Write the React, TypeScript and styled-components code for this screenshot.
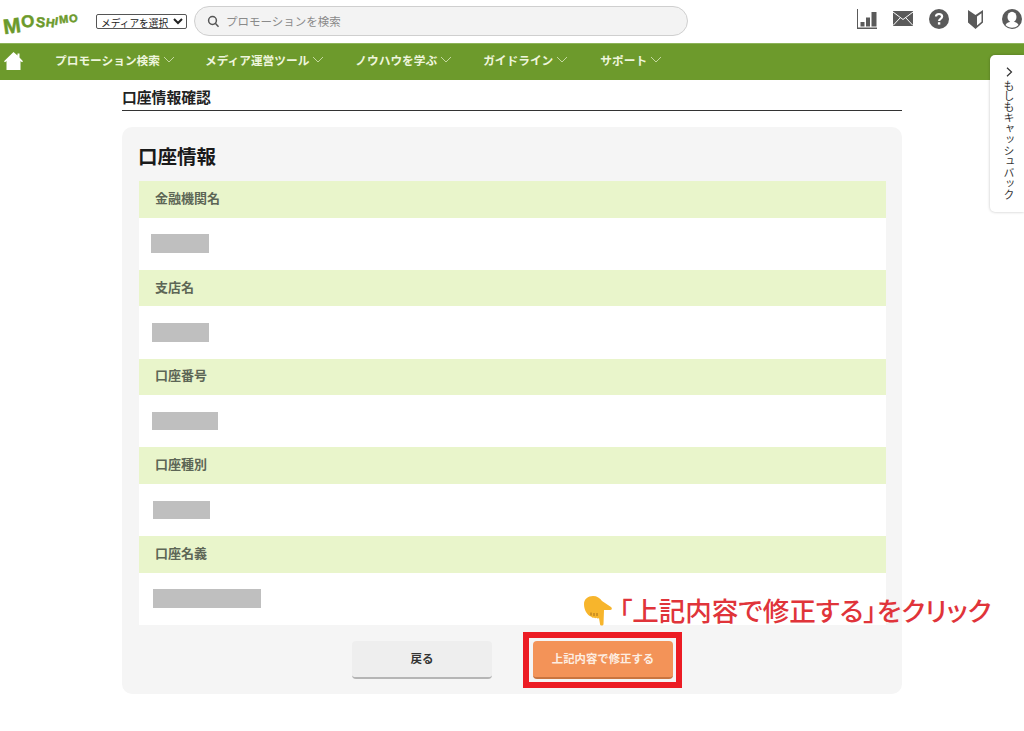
import React from "react";
import styled, { createGlobalStyle } from "styled-components";

const Global = createGlobalStyle`
  html, body { margin: 0; padding: 0; background: #fff; }
  body { font-family: "Noto Sans CJK JP", "Liberation Sans", sans-serif; color: #222; }
`;
const Page = styled.div`
  position: relative;
  width: 1024px;
  height: 731px;
  overflow: hidden;
`;
const Header = styled.header`
  display: flex;
  align-items: center;
  height: 43px;
  padding: 0 2px 0 3px;
  box-sizing: border-box;
`;
const Logo = styled.div`
  display: flex;
  align-items: center;
  width: 93px;
  height: 30px;
  font-family: "Liberation Sans", sans-serif;
  font-weight: 700;
  color: #6c9a2b;
  line-height: 1;
`;
const LogoLetter = styled.span<{ $size: number; $y: number; $r: number }>`
  font-size: ${(p) => p.$size}px;
  -webkit-text-stroke: 0.5px #6c9a2b;
  margin-right: 0.9px;
  transform: translateY(${(p) => p.$y}px) rotate(${(p) => p.$r}deg);
`;
const MediaSelect = styled.select`
  width: 91px;
  height: 15px;
  padding: 0;
  font: 9.7px "Noto Sans CJK JP", sans-serif;
  color: #222;
  background: #fff;
  border: 1px solid #555;
  border-radius: 2px;
  box-sizing: border-box;
`;
const Search = styled.div`
  display: flex;
  align-items: center;
  gap: 6px;
  width: 494px;
  height: 30px;
  margin-left: 7px;
  padding-left: 12px;
  box-sizing: border-box;
  background: #f3f3f3;
  border: 1.5px solid #cfcfcf;
  border-radius: 15px;
  margin-top: -1px;
  font-size: 11.5px;
  color: #8a8a8a;
`;
const HeaderIcons = styled.div`
  display: flex;
  align-items: center;
  margin-left: auto;
  gap: 16px;
  margin-top: -6px;
`;
const Nav = styled.nav`
  display: flex;
  align-items: center;
  height: 37px;
  background: #6d9a2c;
  border-top: 1px solid #8db35a;
  box-sizing: border-box;
  padding: 0 0 5px 4px;
`;
const HomeLink = styled.div`
  display: flex;
  width: 51px;
  margin-top: 3px;
`;
const NavItem = styled.div<{ $gap: number }>`
  display: flex;
  align-items: center;
  gap: 3px;
  margin-right: ${(p) => p.$gap}px;
  font-size: 11.7px;
  font-weight: 700;
  color: #eef5dc;
`;
const Main = styled.main`
  width: 780px;
  margin: 0 0 0 122px;
`;
const PageTitle = styled.h1`
  height: 31px;
  margin: 0;
  padding-top: 7px;
  box-sizing: border-box;
  border-bottom: 1px solid #333;
  font-size: 14.8px;
  line-height: 19px;
  font-weight: 700;
  color: #222;
`;
const Card = styled.section`
  height: 567px;
  margin-top: 16px;
  padding: 16px 16px 0 17px;
  box-sizing: border-box;
  background: #f5f5f5;
  border-radius: 10px;
`;
const CardTitle = styled.h2`
  height: 38px;
  margin: 0 0 0 -1px;
  font-size: 19.5px;
  line-height: 26px;
  font-weight: 700;
  color: #1a1a1a;
`;
const Field = styled.div`
  height: 88.75px;
`;
const FieldLabel = styled.div`
  display: flex;
  align-items: center;
  height: 36.5px;
  padding: 0 0 4px 16px;
  box-sizing: border-box;
  background: #e9f5cb;
  font-size: 13px;
  font-weight: 700;
  color: #5d6656;
`;
const FieldValue = styled.div`
  display: flex;
  align-items: center;
  height: 52.25px;
  background: #fff;
`;
const Redacted = styled.div<{ $w: number; $x: number }>`
  width: ${(p) => p.$w}px;
  height: 18.5px;
  margin-left: ${(p) => p.$x}px;
  background: #bfbfbf;
`;
const Actions = styled.div`
  display: flex;
  gap: 41px;
  margin-top: 16px;
  margin-left: 213px;
`;
const Button = styled.button<{ $primary?: boolean }>`
  width: 140px;
  height: 38px;
  padding: 0 0 2px;
  border: 0;
  border-bottom: 2px solid ${(p) => (p.$primary ? "#c9743f" : "#b5b5b5")};
  border-radius: 4px;
  background: ${(p) => (p.$primary ? "#f39358" : "#eeeeee")};
  color: ${(p) => (p.$primary ? "#fdeee2" : "#333")};
  font: 700 ${(p) => (p.$primary ? "11.4px" : "11.5px")} "Noto Sans CJK JP", sans-serif;
`;
const SideTab = styled.aside`
  position: absolute;
  top: 55px;
  right: 0;
  width: 34px;
  height: 157px;
  display: flex;
  flex-direction: column;
  align-items: center;
  padding: 12px 0 0 4px;
  box-sizing: border-box;
  background: #fff;
  border-radius: 5px 0 0 5px;
  box-shadow: 0 0 3px rgba(0, 0, 0, 0.25);
`;
const SideText = styled.span`
  writing-mode: vertical-rl;
  font-size: 10.9px;
  line-height: 14px;
  color: #333;
  margin-top: 3px;
`;
const RedFrame = styled.div`
  position: absolute;
  left: 523px;
  top: 632px;
  width: 159px;
  height: 56px;
  box-sizing: border-box;
  border: 6px solid #ec1c24;
`;
const Callout = styled.div`
  position: absolute;
  left: 583px;
  top: 594px;
  display: flex;
  align-items: center;
  height: 34px;
  font-size: 26.5px;
  font-weight: 500;
  font-feature-settings: "palt";
  white-space: nowrap;
  color: #e0343a;
`;
const CalloutText = styled.span`
  margin: -4px 0 0 6px;
`;

const ChevronDown = () => (
  <svg width="12" height="7" viewBox="0 0 12 7" fill="none" stroke="#c4d8a0" strokeWidth="1">
    <path d="M1 1l5 5 5-5" />
  </svg>
);
const items: [string, number][] = [
  ["プロモーション検索", 30],
  ["メディア運営ツール", 31],
  ["ノウハウを学ぶ", 31],
  ["ガイドライン", 32],
  ["サポート", 0],
];
const fields: [string, number, number][] = [
  ["金融機関名", 58, 12],
  ["支店名", 57, 13],
  ["口座番号", 66, 13],
  ["口座種別", 57, 14],
  ["口座名義", 108, 14],
];

export default function App() {
  return (
    <Page>
      <Global />
      <Header>
        <Logo>
          <LogoLetter $size={21} $y={4} $r={-8}>M</LogoLetter>
          <LogoLetter $size={17} $y={0} $r={-4}>O</LogoLetter>
          <LogoLetter $size={14} $y={0} $r={6}>S</LogoLetter>
          <LogoLetter $size={12} $y={1} $r={8}>H</LogoLetter>
          <LogoLetter $size={11} $y={0} $r={8}>I</LogoLetter>
          <LogoLetter $size={11} $y={-2} $r={-6}>M</LogoLetter>
          <LogoLetter $size={11} $y={-3} $r={-6}>O</LogoLetter>
        </Logo>
        <MediaSelect defaultValue="a">
          <option value="a">メディアを選択</option>
        </MediaSelect>
        <Search>
          <svg width="13" height="13" viewBox="0 0 13 13" fill="none" stroke="#555" strokeWidth="1.5">
            <circle cx="5.5" cy="5.5" r="3.9" />
            <path d="M8.3 8.3l3.2 3.4" />
          </svg>
          プロモーションを検索
        </Search>
        <HeaderIcons>
          <svg width="20" height="20" viewBox="0 0 20 20" fill="#5a5a5a">
            <path d="M0 0h1v18.500h19v1.500H0z" />
            <rect x="3.500" y="13" width="4" height="4.500" />
            <rect x="9" y="8.500" width="4" height="9" />
            <rect x="14.500" y="3" width="5" height="14.500" />
          </svg>
          <svg width="20" height="15" viewBox="0 0 20 15">
            <rect width="20" height="15" fill="#5a5a5a" />
            <path d="M0 1l10 7.500 10-7.500M0 14.500l7.500-8M20 14.500l-7.500-8" fill="none" stroke="#fff" strokeWidth="1" />
          </svg>
          <svg width="20" height="20" viewBox="0 0 20 20">
            <circle cx="10" cy="10" r="10" fill="#5a5a5a" />
            <path d="M7 7.600C7 5.800 8.300 5 10 5s3.100.9 3.100 2.600c0 2.400-3 2.200-3 4.400" fill="none" stroke="#fff" strokeWidth="2.200" />
            <rect x="8.900" y="13.200" width="2.400" height="2.400" fill="#fff" />
          </svg>
          <svg width="15" height="20" viewBox="0 0 15 20" style={{ marginLeft: 3 }}>
            <path d="M0 1l7.500 5L15 1v12.500L7.500 20 0 13.500z" fill="#5a5a5a" />
            <path d="M9 7.500l4.500-3.200v8.500L9 16.500z" fill="#fff" />
          </svg>
          <svg width="20" height="20" viewBox="0 0 20 20" style={{ marginLeft: 3 }}>
            <circle cx="10" cy="10" r="10" fill="#5a5a5a" />
            <ellipse cx="10" cy="8" rx="4.500" ry="5.300" fill="#fff" />
            <path d="M3.500 16c1-2.500 3.500-3.200 6.500-3.200s5.500.7 6.500 3.200c-1.800 1.800-4 2.700-6.500 2.700s-4.700-.9-6.500-2.700z" fill="#fff" />
          </svg>
        </HeaderIcons>
      </Header>
      <Nav>
        <HomeLink>
          <svg width="19" height="18" viewBox="0 0 19 18" fill="#fff">
            <path d="M9.500 0l4 3.600V1.500h2v4L19 9.200l-1 1-1.500-1.200V18h-14V9L1 10.200l-1-1z" />
          </svg>
        </HomeLink>
        {items.map(([label, gap]) => (
          <NavItem key={label} $gap={gap}>
            {label}
            <ChevronDown />
          </NavItem>
        ))}
      </Nav>
      <Main>
        <PageTitle>口座情報確認</PageTitle>
        <Card>
          <CardTitle>口座情報</CardTitle>
          {fields.map(([label, w, x]) => (
            <Field key={label}>
              <FieldLabel>{label}</FieldLabel>
              <FieldValue>
                <Redacted $w={w} $x={x} />
              </FieldValue>
            </Field>
          ))}
          <Actions>
            <Button>戻る</Button>
            <Button $primary>上記内容で修正する</Button>
          </Actions>
        </Card>
      </Main>
      <SideTab>
        <svg width="7" height="10" viewBox="0 0 7 10" fill="none" stroke="#333" strokeWidth="1.2">
          <path d="M1 .7l4.500 4.300L1 9.300" />
        </svg>
        <SideText>もしもキャッシュバック</SideText>
      </SideTab>
      <RedFrame />
      <Callout>
        <svg width="30" height="32" viewBox="0 0 30 32">
          <path d="M1 9c0-5 4-8 9-8 4 0 7 2 9 5l9 6c1.500 1 1 3-1 3h-6l-.5 14c0 2-3.500 2-3.500 0l-1-6c-1 .8-2 .6-2.500-.2-1 .8-2 .5-2.500-.3-1 .7-2.200.3-2.600-.7C4 20 1 15 1 9z" fill="#f7b52c" />
          <path d="M8 17.500v3M11 18v3M14 18v3" stroke="#a8701a" strokeWidth="1" />
        </svg>
        <CalloutText>「上記内容で修正する」をクリック</CalloutText>
      </Callout>
    </Page>
  );
}
